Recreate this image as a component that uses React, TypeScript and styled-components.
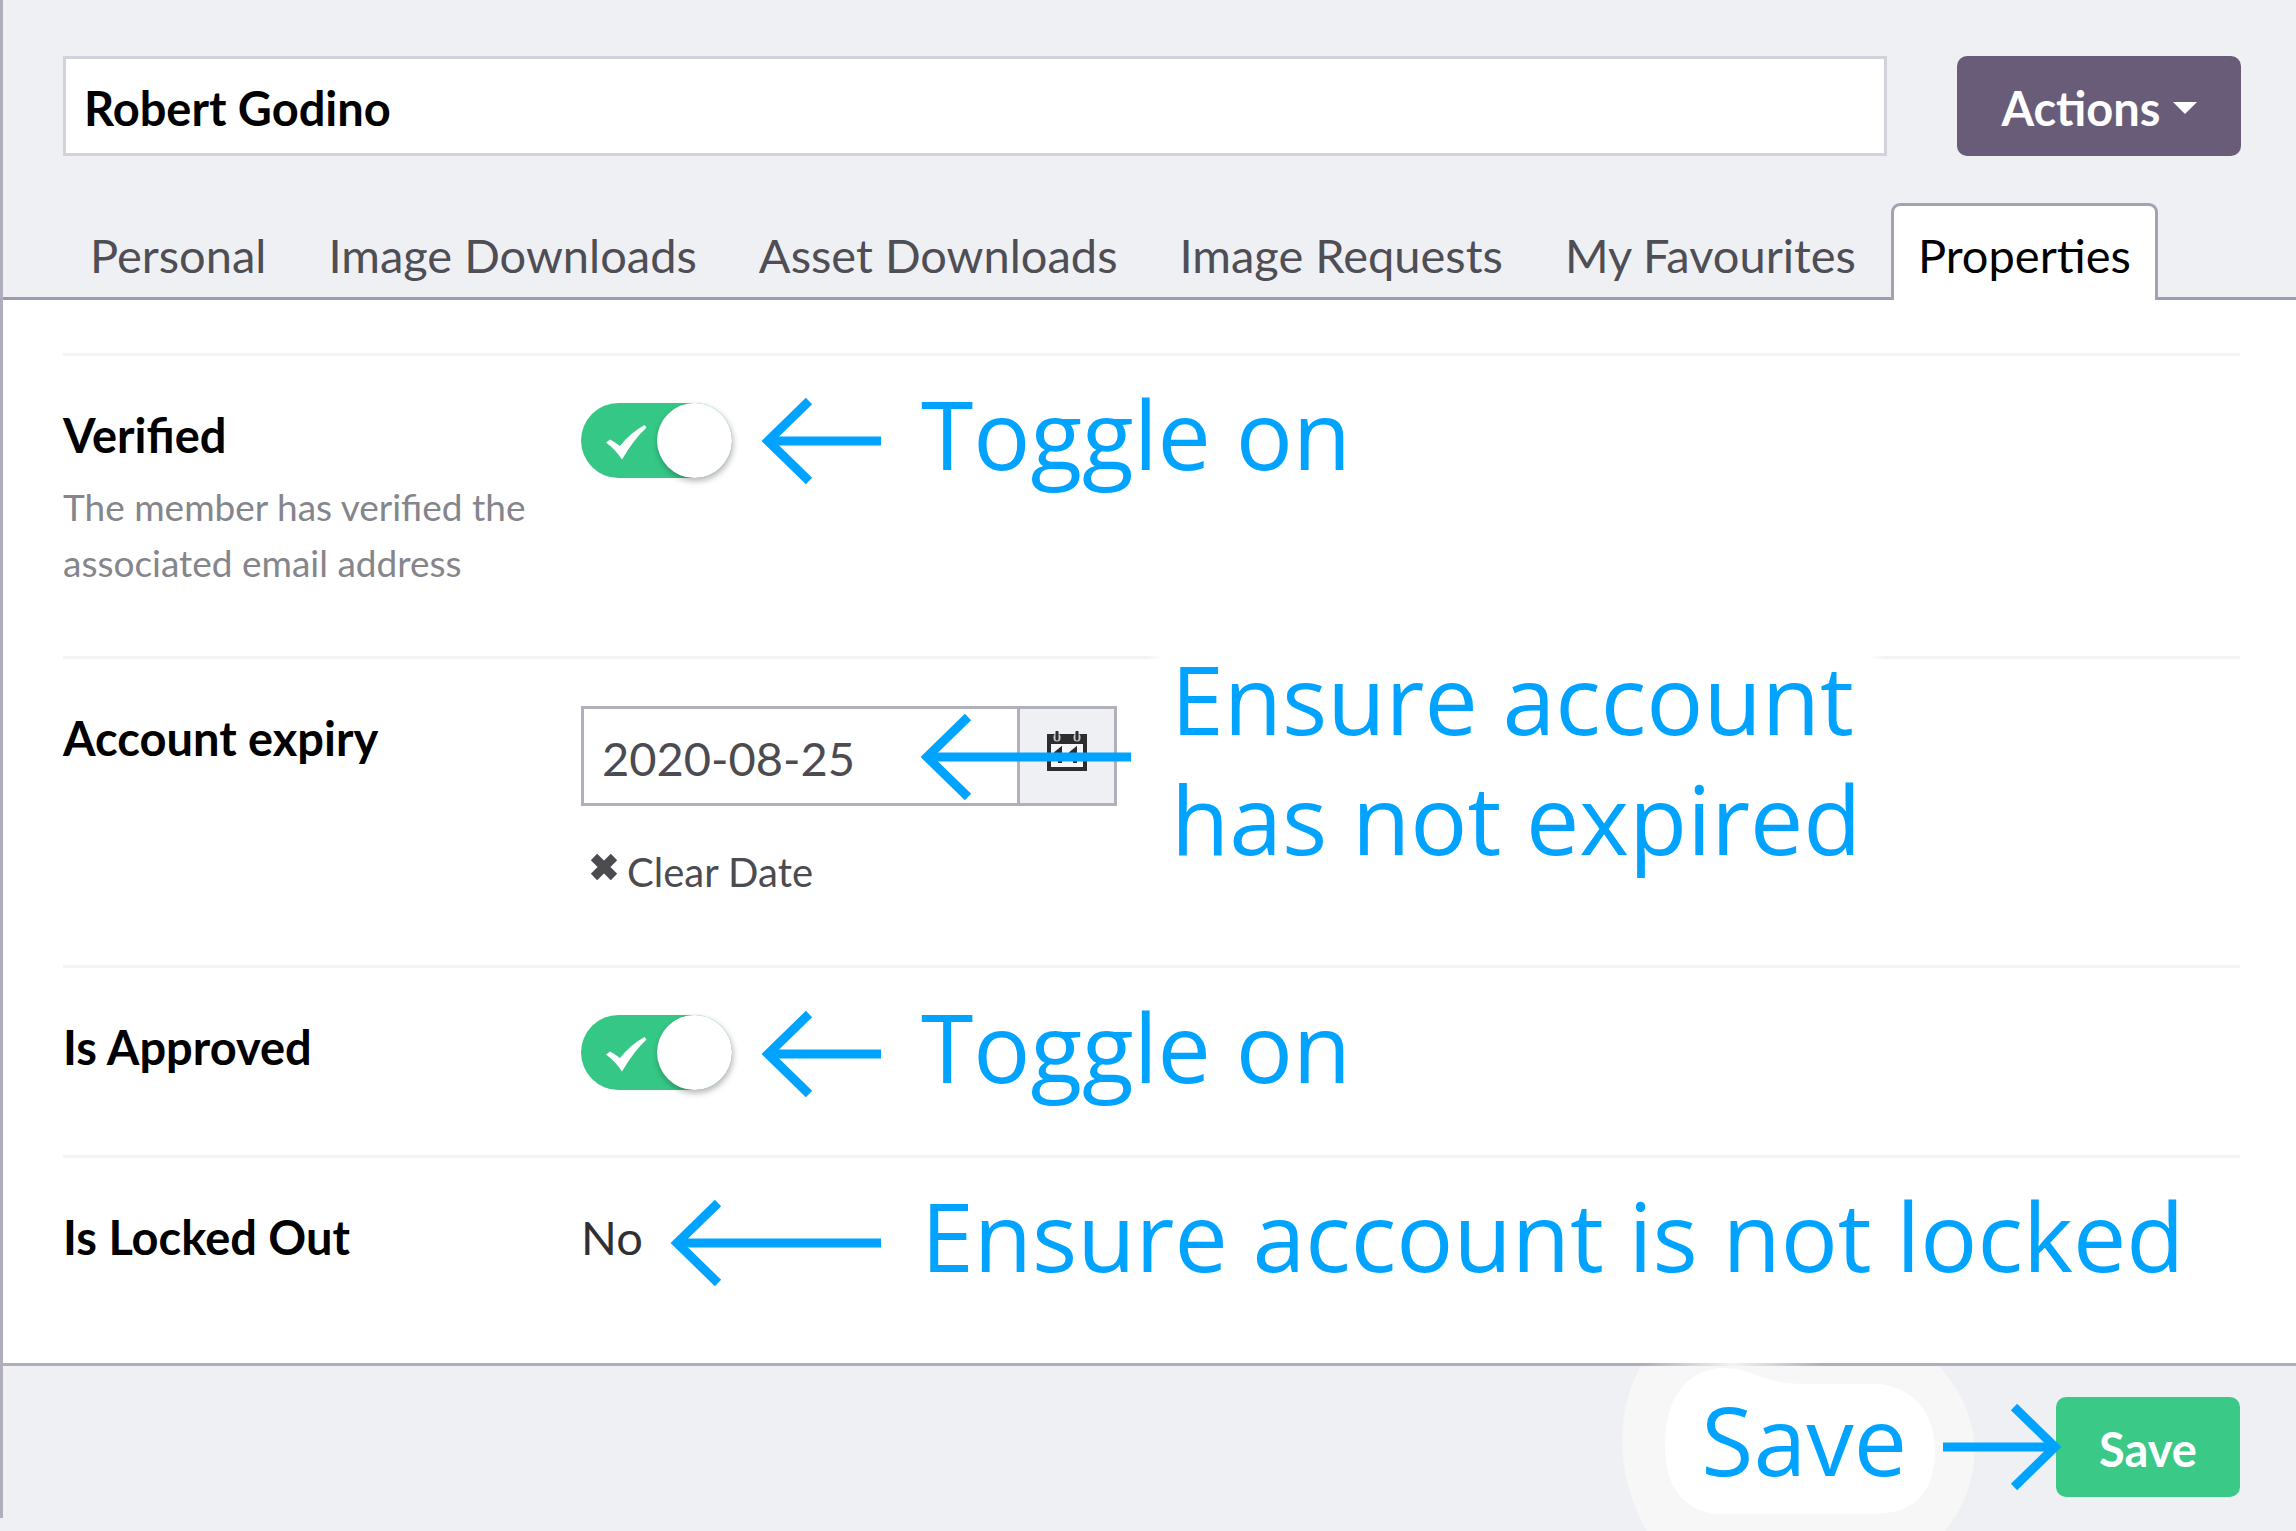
import React from "react";
import styled, { createGlobalStyle } from "styled-components";

const sans = `Lato, "Liberation Sans", sans-serif`;
const accent = "#00a3ff";

const GlobalStyle = createGlobalStyle`
  *, *::before, *::after { box-sizing: border-box; }
  body { margin: 0; background: #eff0f4; font-family: ${sans}; }
  button, input { font-family: inherit; margin: 0; }
`;

const Page = styled.div`
  display: flex;
  flex-direction: column;
  min-height: 100vh;
  padding-bottom: 13px;
  overflow: hidden;
`;

const Editor = styled.div`
  flex: 1;
  display: flex;
  flex-direction: column;
  border-left: 3px solid #b0adbd;
`;

const Header = styled.header`
  display: flex;
  gap: 70px;
  padding: 56px 55px 47px 60px;
`;

const NameInput = styled.input`
  flex: 1;
  min-width: 0;
  height: 100px;
  padding: 3px 18px 0;
  border: 3px solid #d3d2da;
  background: #fff;
  color: #000;
  font-size: 47px;
  font-weight: 700;
`;

const Button = styled.button<{ $color: string; $wide?: boolean }>`
  display: flex;
  align-items: center;
  justify-content: center;
  gap: 12px;
  width: ${(p) => (p.$wide ? 284 : 184)}px;
  height: 100px;
  padding: 3px 0 0;
  border: 0;
  border-radius: 10px;
  background: ${(p) => p.$color};
  color: #fff;
  font-size: 47px;
  font-weight: 700;
  line-height: 64px;
`;

const Caret = styled.span`
  border: 12px solid transparent;
  border-top-color: #fff;
  border-bottom: 0;
`;

const Tabs = styled.nav`
  display: flex;
  gap: 8px;
  padding: 0 60px;
  border-bottom: 3px solid #9f9bae;
`;

const Tab = styled.button<{ $active?: boolean }>`
  height: 97px;
  margin-bottom: -3px;
  padding: 3px 24px 0;
  border: 3px solid ${(p) => (p.$active ? "#a5a1b3" : "transparent")};
  border-bottom: 0;
  border-radius: 9px 9px 0 0;
  background: ${(p) => (p.$active ? "#fff" : "transparent")};
  color: ${(p) => (p.$active ? "#000" : "#4e4e54")};
  font-size: 47px;
  line-height: 64px;
  white-space: nowrap;
`;

const Panel = styled.main`
  flex: 1;
  padding: 53px 56px 0 60px;
  background: #fff;
`;

const Row = styled.section`
  position: relative;
  display: grid;
  grid-template-columns: 518px 1fr;
  padding: 47px 0 65px;
  border-top: 3px solid #f3f3f6;
`;

const Label = styled.label`
  display: block;
  color: #000;
  font-size: 47px;
  font-weight: 700;
  line-height: 64px;
`;

const Description = styled.p`
  margin: 12px 0 0;
  color: #85858c;
  font-size: 37px;
  line-height: 56px;
`;

const Value = styled.output`
  color: #303033;
  font-size: 47px;
  line-height: 64px;
`;

const ToggleTrack = styled.span`
  position: relative;
  display: flex;
  align-items: center;
  justify-content: space-between;
  width: 151px;
  height: 75px;
  padding-left: 25px;
  border-radius: 38px;
  background: #35c786;
`;

const ToggleInput = styled.input`
  position: absolute;
  inset: 0;
  width: 100%;
  height: 100%;
  opacity: 0;
`;

const Knob = styled.span`
  width: 75px;
  height: 75px;
  border-radius: 50%;
  background: #fff;
  box-shadow: 1px 3px 6px rgba(0, 0, 0, 0.3);
`;

const DateField = styled.div`
  display: flex;
  width: 536px;
  height: 100px;
  border: 3px solid #b3b0bd;
`;

const DateInput = styled.input`
  flex: 1;
  min-width: 0;
  padding: 3px 18px 0;
  border: 0;
  background: #fff;
  color: #4b4b50;
  font-size: 47px;
`;

const DateButton = styled.button`
  width: 97px;
  padding: 0 0 8px;
  border: 0;
  border-left: 3px solid #b3b0bd;
  background: #eef0f4;
`;

const ClearButton = styled.button`
  display: flex;
  align-items: center;
  gap: 9px;
  margin: 38px 0 0;
  padding: 0 0 0 9px;
  border: 0;
  background: none;
  color: #4b4b50;
  font-size: 40px;
  line-height: 56px;

  svg {
    margin-bottom: 10px;
  }
`;

const Footer = styled.footer`
  position: relative;
  display: flex;
  justify-content: flex-end;
  padding: 31px 56px 21px;
  border-top: 3px solid #b0adbd;
`;

const Note = styled.div<{ $left: number; $top: number }>`
  position: absolute;
  z-index: 1;
  left: ${(p) => p.$left}px;
  top: ${(p) => p.$top}px;
  display: flex;
  align-items: flex-start;
  gap: 40px;
  pointer-events: none;
`;

const FooterNote = styled.div`
  position: absolute;
  top: 13px;
  right: 234px;
  display: flex;
  align-items: flex-start;
  gap: 36px;
  pointer-events: none;
`;

const NoteText = styled.span<{ $halo?: boolean }>`
  position: relative;
  color: ${accent};
  font-family: "Open Sans", "Noto Sans", sans-serif;
  font-size: 95px;
  line-height: 120px;
  white-space: nowrap;
  ${(p) => p.$halo && "background: #fff; box-shadow: 0 0 12px 16px #fff;"}
`;

const ArrowBox = styled.svg<{ $drop: number }>`
  position: relative;
  flex: none;
  margin-top: ${(p) => p.$drop}px;
  overflow: visible;
`;

const Halo = styled.svg`
  position: absolute;
  left: -78px;
  top: -13px;
  overflow: visible;
`;

function Arrow({ length, drop = 24, right }: { length: number; drop?: number; right?: boolean }) {
  const points = right
    ? `${length - 48},4 ${length - 7},44 ${length - 48},84`
    : "48,4 7,44 48,84";
  return (
    <ArrowBox $drop={drop} width={length} height={88} fill="none" stroke={accent} strokeWidth={9} aria-hidden>
      <polyline points={points} />
      <path d={right ? `M0 44H${length - 7}` : `M7 44H${length}`} />
    </ArrowBox>
  );
}

function Toggle({ id }: { id: string }) {
  return (
    <ToggleTrack>
      <svg width="41" height="39" viewBox="0 -4 41 39" aria-hidden>
        <path d="M0 17.5L4 14.5Q9 17 14 21Q24 8 38.5 0L40.5 2.5Q28 14 16 34.5Q9 24 0 17.5Z" fill="#fff" />
      </svg>
      <Knob />
      <ToggleInput id={id} type="checkbox" role="switch" defaultChecked />
    </ToggleTrack>
  );
}

function CalendarIcon() {
  return (
    <svg width="40" height="40" viewBox="0 0 40 40" aria-hidden>
      <path d="M0 3H40V40H0Z" fill="#2d2d30" />
      <path d="M4 13H36V36H4Z" fill="#f6f7f9" />
      <path d="M10 6V7M30 6V7" stroke="#c9cacd" strokeWidth="7" strokeLinecap="round" />
      <path d="M10 1V8M30 1V8" stroke="#2d2d30" strokeWidth="3" strokeLinecap="round" />
      <path d="M8 23L13 19V32M23 23L28 19V32" stroke="#2d2d30" strokeWidth="4" fill="none" />
    </svg>
  );
}

function CrossIcon() {
  return (
    <svg width="28" height="28" viewBox="0 0 28 28" aria-hidden>
      <path d="M4 4L24 24M24 4L4 24" stroke="#4b4b50" strokeWidth="9" />
    </svg>
  );
}

const tabs = ["Personal", "Image Downloads", "Asset Downloads", "Image Requests", "My Favourites", "Properties"];

export default function App() {
  return (
    <Page>
      <GlobalStyle />
      <Editor>
        <Header>
          <NameInput aria-label="Member name" defaultValue="Robert Godino" />
          <Button $color="#685c79" $wide>
            Actions <Caret />
          </Button>
        </Header>
        <Tabs>
          {tabs.map((name) => (
            <Tab key={name} $active={name === "Properties"}>
              {name}
            </Tab>
          ))}
        </Tabs>
        <Panel>
          <Row>
            <div>
              <Label htmlFor="verified">Verified</Label>
              <Description>The member has verified the associated email address</Description>
            </div>
            <Toggle id="verified" />
            <Note $left={698} $top={17}>
              <Arrow length={120} />
              <NoteText>Toggle on</NoteText>
            </Note>
          </Row>
          <Row>
            <Label htmlFor="expiry">Account expiry</Label>
            <div>
              <DateField>
                <DateInput id="expiry" defaultValue="2020-08-25" />
                <DateButton aria-label="Choose date">
                  <CalendarIcon />
                </DateButton>
              </DateField>
              <ClearButton>
                <CrossIcon />
                Clear Date
              </ClearButton>
            </div>
            <Note $left={857} $top={-21}>
              <Arrow length={211} drop={75} />
              <NoteText $halo>
                Ensure account
                <br />
                has not expired
              </NoteText>
            </Note>
          </Row>
          <Row>
            <Label htmlFor="approved">Is Approved</Label>
            <Toggle id="approved" />
            <Note $left={698} $top={18}>
              <Arrow length={120} />
              <NoteText>Toggle on</NoteText>
            </Note>
          </Row>
          <Row>
            <Label as="span">Is Locked Out</Label>
            <Value>No</Value>
            <Note $left={607} $top={17}>
              <Arrow length={211} />
              <NoteText>Ensure account is not locked</NoteText>
            </Note>
          </Row>
        </Panel>
        <Footer>
          <FooterNote>
            <Halo width="354" height="165" aria-hidden>
              <defs>
                <linearGradient id="fade">
                  <stop offset="0" stopColor="#fff" stopOpacity="0" />
                  <stop offset="0.5" stopColor="#fff" stopOpacity="0.85" />
                  <stop offset="1" stopColor="#fff" stopOpacity="0" />
                </linearGradient>
              </defs>
              <rect x="20" y="-3" width="180" height="3" fill="url(#fade)" />
              <path d="M18 0H316C362 50 362 115 322 165H24C-8 110 -8 45 18 0Z" fill="#f7f7f7" />
              <path d="M42 80C42 24 70 4 98 2C130 2 140 18 180 18H250C290 18 312 48 312 84C312 128 290 148 250 148H100C60 148 42 120 42 80Z" fill="#fff" />
            </Halo>
            <NoteText>Save</NoteText>
            <Arrow length={119} right />
          </FooterNote>
          <Button $color="#3ac987">Save</Button>
        </Footer>
      </Editor>
    </Page>
  );
}
